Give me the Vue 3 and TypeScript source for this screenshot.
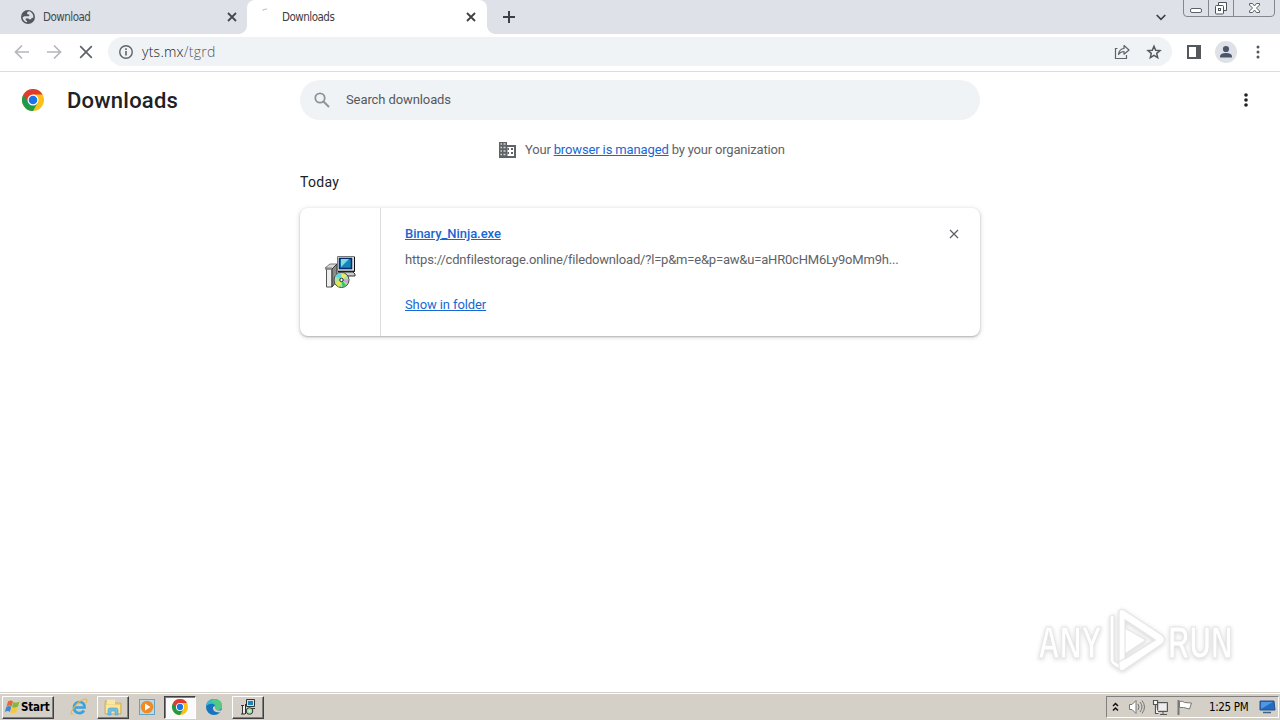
<script setup lang="ts">
interface Tab {
  title: string
  active: boolean
}

const tabs: Tab[] = [
  { title: 'Download', active: false },
  { title: 'Downloads', active: true },
]

const download = {
  file: 'Binary_Ninja.exe',
  url: 'https://cdnfilestorage.online/filedownload/?l=p&m=e&p=aw&u=aHR0cHM6Ly9oMm9h...',
}
</script>

<template>
  <div class="screen">
    <svg class="defs" width="0" height="0" aria-hidden="true">
      <symbol id="chrome" viewBox="0 0 24 24">
        <circle cx="12" cy="12" r="12" fill="#fbc116" />
        <path d="M12 12 1.6 6A12 12 0 0 0 12 24L17.2 15Z" fill="#1e9a4b" />
        <path d="M1.6 6A12 12 0 0 1 22.4 6H12L6.8 15Z" fill="#e03b2f" />
        <circle cx="12" cy="12" r="6" fill="#fff" />
        <circle cx="12" cy="12" r="4.7" fill="#1a73e8" />
      </symbol>
      <symbol id="cross" viewBox="0 0 10 10">
        <path d="M1 1 9 9M9 1 1 9" fill="none" stroke="currentColor" />
      </symbol>
      <symbol id="installer" viewBox="0 0 32 32">
        <path d="M1 12 6 8h7l-5 5Z" fill="#d8d8d8" stroke="#777" />
        <path d="M2.500 13H8v18H2.500Z" fill="#eee" stroke="#555" />
        <path d="m8 13 5-5v17l-5 6Z" fill="#888" stroke="#333" />
        <path d="M1 12.500h7" stroke="#888" stroke-width="2" />
        <path d="M13.500.500h17V15h-17Z" fill="#ddd" stroke="#777" />
        <path d="M30.500 1v14.500H14" fill="none" stroke="#111" />
        <path d="M15.500 2.500h12v10h-12Z" fill="#1486b8" stroke="#002a70" stroke-width="1.500" />
        <path d="m17 11 8-8h-8Z" fill="#8ad5e4" />
        <path d="M15 16h14l2 2v2H14Z" fill="#ccc" stroke="#333" />
        <circle cx="17.500" cy="24" r="7.500" fill="#a8e6a0" stroke="#444" />
        <path d="m17.500 24-6.500-4a7 7 0 0 1 5.500-3Z" fill="#63d7df" />
        <path d="m17.500 24 1-7 4 2.500Z" fill="#f3ec63" />
        <path d="m17.500 24 7-1-1 4.500Z" fill="#d99be0" />
        <path d="m17.500 24-6.500 3 4 4Z" fill="#f2e53a" />
        <path d="m17.500 24 1 7 3.500-2Z" fill="#2fca5b" />
        <circle cx="17.500" cy="24" r="1.700" fill="#fff" stroke="#222" />
      </symbol>
    </svg>

    <header class="tabstrip">
      <div v-for="tab in tabs" :key="tab.title" class="tab" :class="{ active: tab.active }">
        <svg v-if="!tab.active" class="favicon" viewBox="0 0 14 14">
          <circle cx="7" cy="7" r="7" fill="#54585e" />
          <path d="M8 1.300C6 1.800 5.800 3 6.300 4c.5.900 1.500 0 2 .7S8 6.300 6.800 6.300H3.500L1.600 7.200C1.700 9.500 3.500 12 6 12.300c.6-1-.3-1.500-1-2S4.500 8.300 6 8.300s2 1.200 3 1.200S10.500 8 12.300 7.600C12.700 4.500 10.500 2 8 1.300Z" fill="#dee1e6" />
        </svg>
        <svg v-else class="favicon spinner" viewBox="0 0 14 14">
          <path d="M1.500 3.500Q3 2 6 2.200" fill="none" stroke="#c5c7ca" stroke-width="1.300" />
        </svg>
        <span class="tab-title">{{ tab.title }}</span>
        <svg class="tab-close"><use href="#cross" /></svg>
      </div>
      <svg class="plus" viewBox="0 0 12 12"><path d="M6 0v12M0 6h12" stroke="#3c4043" stroke-width="2" /></svg>
      <div class="strip-right">
        <svg class="chevron" viewBox="0 0 10 7"><path d="m.7 1 4.300 4.300L9.300 1" fill="none" stroke="#3c4043" stroke-width="1.700" /></svg>
        <svg class="window-controls" viewBox="0 0 94 18">
          <path d="M1.500 0v13q0 3.500 3.500 3.500h84q3.500 0 3.500-3.500V0M26.500 0v16M51.500 0v16" fill="none" stroke="#84888e" />
          <rect x="8.500" y="8.500" width="11" height="4" rx="1.500" fill="#fff" stroke="#5b6069" />
          <path d="M36.500 5V2.500h8v8H42" fill="#fff" stroke="#4d525b" />
          <rect x="33.500" y="5.500" width="8" height="8.500" rx="1" fill="#fff" stroke="#4d525b" />
          <rect x="36.500" y="8.500" width="2" height="2" fill="none" stroke="#4d525b" />
          <path d="M67.500 3.500h3l2 2.500 2-2.500h3v1.500L74.500 8l3 3v1.500h-3l-2-2.500-2 2.500h-3V11l3-3-3-3Z" fill="#fff" stroke="#5b6069" />
        </svg>
      </div>
    </header>

    <div class="toolbar">
      <svg class="nav" viewBox="0 0 16 16"><path d="M15 8H2m6-6.500L1.500 8 8 14.500" fill="none" stroke="#b5b7ba" stroke-width="1.700" /></svg>
      <svg class="nav" viewBox="0 0 16 16"><path d="M1 8h13M8 1.500 14.500 8 8 14.500" fill="none" stroke="#b5b7ba" stroke-width="1.700" /></svg>
      <svg class="nav" viewBox="0 0 16 16"><path d="m2.200 2.200 11.600 11.600m0-11.600L2.200 13.800" stroke="#5f6368" stroke-width="1.700" /></svg>
      <div class="omnibox">
        <svg class="info" viewBox="0 0 14 14">
          <circle cx="7" cy="7" r="6.250" fill="none" stroke="#5f6368" stroke-width="1.400" />
          <path d="M7 6v4.500M7 3.300v1.600" stroke="#5f6368" stroke-width="1.600" />
        </svg>
        <span class="address"><span class="host">yts.mx</span>/tgrd</span>
        <svg class="share" viewBox="0 0 16 16">
          <path d="M3.500 4.500H1.500v10h11V11" fill="none" stroke="#5f6368" stroke-width="1.200" />
          <path d="M4.500 10.500Q5 5 10 4.500v-3L15 6l-5 4.200V7.500Q6.500 7.500 4.500 10.500Z" fill="none" stroke="#5f6368" stroke-width="1.200" stroke-linejoin="round" />
        </svg>
        <svg class="star" viewBox="0 0 16 16"><path d="m8 2.200 1.700 4 4.300.4-3.300 2.800 1 4.300L8 11.400l-3.700 2.300 1-4.300L2 6.600l4.300-.4Z" fill="none" stroke="#55595e" stroke-width="1.500" /></svg>
      </div>
      <svg class="panel" viewBox="0 0 14 14"><path d="M1 1h12v12H1Z" fill="none" stroke="#54575c" stroke-width="2" /><path d="M9 0h5v14H9Z" fill="#54575c" /></svg>
      <svg class="avatar" viewBox="0 0 22 22">
        <circle cx="11" cy="11" r="11" fill="#dee1e6" />
        <circle cx="11" cy="8" r="3.100" fill="#4b556b" />
        <path d="M5 16.500v-1Q5 12 11 12t6 3.500v1Z" fill="#4b556b" />
      </svg>
      <svg class="dots" viewBox="0 0 4 14"><circle cx="2" cy="2" r="1.500" /><circle cx="2" cy="7" r="1.500" /><circle cx="2" cy="12" r="1.500" /></svg>
    </div>

    <main class="page">
      <div class="page-head">
        <svg class="logo"><use href="#chrome" /></svg>
        <h1>Downloads</h1>
        <div class="search">
          <svg class="lens" viewBox="0 0 16 16"><circle cx="6" cy="6" r="4.700" fill="none" stroke="#909396" stroke-width="1.800" /><path d="m9.500 9.500 5.500 5.500" stroke="#909396" stroke-width="2" /></svg>
          <span class="placeholder">Search downloads</span>
        </div>
        <svg class="dots dark" viewBox="0 0 4 14"><circle cx="2" cy="2" r="1.800" /><circle cx="2" cy="7" r="1.800" /><circle cx="2" cy="12" r="1.800" /></svg>
      </div>

      <div class="managed">
        <svg class="building" viewBox="0 0 18 16">
          <path d="M1 0h8v3h9v13H1Z" fill="#5f6368" />
          <path d="M2.500 2H4M5.500 2h2M2.500 5.500H4M5.500 5.500h2M2.500 9H4M5.500 9h2M2.500 12.500H4M5.500 12.500h2" stroke="#d5d7d9" stroke-width="1.300" />
          <path d="M9.500 5H16v9H9.500Z" fill="#fff" />
          <path d="M9.500 7H11M13 7h2M9.500 11H11M13 11h2" stroke="#5f6368" stroke-width="1.800" />
        </svg>
        <p>Your <a>browser is managed</a> by your organization</p>
      </div>

      <section class="list">
        <h2>Today</h2>
        <article class="card">
          <div class="thumb"><svg class="file-icon"><use href="#installer" /></svg></div>
          <div class="details">
            <a class="file-name">{{ download.file }}</a>
            <span class="source">{{ download.url }}</span>
            <a class="show">Show in folder</a>
          </div>
          <svg class="remove"><use href="#cross" /></svg>
        </article>
      </section>

      <svg class="watermark" viewBox="0 0 204 72">
        <g fill="#fff" stroke="#e6e6e6" stroke-width="1.200">
          <text transform="translate(5 53) scale(.67 1)">ANY</text>
          <text transform="translate(135 53) scale(.66 1)">RUN</text>
          <path d="M77 13q0-3 4-3v46l8 5v4q-12-5-12-10Z" />
          <path fill-rule="evenodd" d="M86 8q0-5 5-3l38 25q5 5 0 9L91 65q-5 2-5-3v-5l36-22-30-20v38l-6 4ZM92 23v26l21-14Z" />
          <path d="m92 15 30 20-30 19" fill="none" />
        </g>
      </svg>
    </main>

    <footer class="taskbar">
      <div class="start">
        <svg class="flag" viewBox="0 0 17 15">
          <path d="M4 2q3-2 5 0L7.500 7q-2-2-5 0Z" fill="#ed642d" />
          <path d="M9.500 2.500q3 1.500 6-.500L14 7q-3 2-6 .500Z" fill="#80b83b" />
          <path d="M2.300 7.500q3-2 5 0l-1.500 5q-2-2-5 0Z" fill="#3f89d0" />
          <path d="M7.800 8q3 1.500 6-.500L12.300 12.500q-3 2-6 .500Z" fill="#f8c735" />
        </svg>
        <b>Start</b>
      </div>
      <div class="task ie">
        <svg viewBox="0 0 18 18">
          <path d="M14 12.500q-2 3-5.500 2.500Q4 14 4 9.500 4.500 4 9.500 4t5 5.500H4" fill="none" stroke="#38a3df" stroke-width="2.700" />
          <path d="M3 16Q-1 17 3 11 9 2 15 1q3 0 1 4" fill="none" stroke="#e5b54b" stroke-width="1.200" />
        </svg>
      </div>
      <div class="task raised">
        <svg viewBox="0 0 18 18">
          <path d="M1 3h6l1 2h9v11H1Z" fill="#f0cf72" stroke="#c89e3c" stroke-width=".6" />
          <path d="M3 1.500h8v5H3Z" fill="#f8e7a6" />
          <path d="M2 7h14v8H2Z" fill="#fae6a0" />
          <path d="M4 17v-5q0-2 2-2h6q2 0 2 2v5h-3v-4H7v4Z" fill="#77bddf" stroke="#4c9fc9" stroke-width=".6" />
        </svg>
      </div>
      <div class="task media">
        <svg viewBox="0 0 18 18">
          <rect x="1.500" y="1.500" width="15" height="15" fill="#bad9e9" stroke="#63a2c5" />
          <circle cx="9" cy="9" r="6.300" fill="#f08b24" /><path d="M7 5.500 12.500 9 7 12.500Z" fill="#fff" />
        </svg>
      </div>
      <div class="task pressed"><svg class="task-chrome"><use href="#chrome" /></svg></div>
      <div class="task edge">
        <svg viewBox="0 0 18 18">
          <circle cx="9" cy="9" r="8" fill="#1574bd" />
          <path d="M1 8Q2 1 9 1t8 7q0 4-4.500 4Q9 12 10 9.500 11 7 8 6T1 8Z" fill="#39bdc5" />
          <path d="M9 1q8 0 8 7 0 4-4.500 4Q9 12 10 9.500 12 5 6 4Z" fill="#54c982" />
          <path d="M10 8q-1 5 5.500 4.500L17 12q-1 2-3 2.500Q7 14 8 9Z" fill="#d4d0c8" />
        </svg>
      </div>
      <div class="task raised">
        <svg class="task-setup" viewBox="0 0 16 16">
          <path d="M6.500.500h8v7h-8Z" fill="#ddd" stroke="#333" />
          <path d="M8 2h5v4H8Z" fill="#1486b8" />
          <path d="M7 9.500h8" stroke="#333" />
          <path d="M1 6.500h3M2.500 7v8M5.500 5v10M1 15h4" stroke="#333" />
          <path d="M3 7h2v7H3Z" fill="#eee" />
          <circle cx="9.500" cy="12" r="3.300" fill="#a4e4a6" stroke="#333" />
          <circle cx="9.500" cy="12" r=".8" fill="#fff" />
        </svg>
      </div>
      <div class="tray">
        <svg class="up" viewBox="0 0 7 10"><path d="m1 4 2.500-2.500L6 4M1 8.500 3.500 6 6 8.500" fill="none" stroke="#111" stroke-width="1.500" /></svg>
        <svg class="sound" viewBox="0 0 18 16"><path d="M1.500 5.500H4l4-4v13l-4-4H1.500Z" fill="#fff" stroke="#777" /><path d="M10 5q2 3 0 6M12 3q4 5 0 10M14 1.500q5 6.500 0 13" fill="none" stroke="#777" /></svg>
        <svg class="network" viewBox="0 0 18 17"><path d="M5.500 3.500h10v9h-10Z" fill="#ccc" stroke="#555" /><path d="M7 5h7v6H7Z" fill="#eee" /><path d="M8 15.500h7M11 13v2" stroke="#555" /><path d="M1.500 1.500h4v4h-4ZM3.500 6v8.500h3" fill="#fff" stroke="#555" stroke-width="1.200" /></svg>
        <svg class="action" viewBox="0 0 17 17"><path d="M2.500 1v15" stroke="#777" stroke-width="2" /><path d="M3.500 2.500q3-1 5 1l7 .500-2 6q-4-1-6-1.500H3.500Z" fill="#fff" stroke="#777" /></svg>
        <span class="clock">1:25 PM</span>
        <svg class="monitor" viewBox="0 0 17 14"><path d="M1 1h14l1 9H1Z" fill="#226bc2" stroke="#24518c" /><path d="M2 2h12L2 9Z" fill="#5196df" /><path d="M4 12.500h8" stroke="#456084" stroke-width="1.500" /></svg>
      </div>
    </footer>
  </div>
</template>

<style>
body {
  margin: 0;
  overflow: hidden;
}
</style>

<style scoped>
* {
  box-sizing: border-box;
}
svg {
  display: block;
  flex: none;
}
.screen {
  width: 1280px;
  height: 720px;
  display: flex;
  flex-direction: column;
  background: #fff;
  font-family: Roboto, "Liberation Sans", sans-serif;
  color: #202124;
  white-space: nowrap;
}
.defs {
  position: absolute;
}
.tabstrip {
  height: 34px;
  flex: none;
  display: flex;
  align-items: flex-start;
  background: #dee1e7;
}
.tab {
  width: 247px;
  height: 34px;
  padding: 0 10px 0 21px;
  display: flex;
  align-items: center;
  color: #45484c;
  position: relative;
}
.tab.active {
  width: 240px;
  padding: 0 11px 0 14px;
  background: #fff;
  border-radius: 8px 8px 0 0;
  color: #3c4043;
}
.tab.active::before,
.tab.active::after {
  content: "";
  position: absolute;
  bottom: 0;
  width: 8px;
  height: 8px;
}
.tab.active::before {
  left: -8px;
  background: radial-gradient(circle at 0 0, transparent 7.5px, #fff 8px);
}
.tab.active::after {
  right: -8px;
  background: radial-gradient(circle at 100% 0, transparent 7.5px, #fff 8px);
}
.favicon {
  width: 14px;
  height: 14px;
}
.spinner {
  margin-top: -6px;
}
.tab-title {
  flex: 1;
  margin: 0 0 0 8px;
  font: 11.5px/16px "DejaVu Sans Condensed", "DejaVu Sans", sans-serif;
  letter-spacing: -0.5px;
}
.active .tab-title {
  margin-left: 7px;
}
.tab-close {
  width: 10px;
  height: 10px;
  stroke-width: 1.8;
}
.plus {
  width: 12px;
  height: 12px;
  margin: 11px 0 0 16px;
}
.strip-right {
  margin-left: auto;
  display: flex;
  align-items: flex-start;
}
.chevron {
  width: 10px;
  height: 7px;
  margin: 14px 16px 0 0;
}
.window-controls {
  width: 94px;
  height: 18px;
  margin-right: 4px;
}
.toolbar {
  height: 38px;
  flex: none;
  display: flex;
  align-items: center;
  padding: 0 20px 2px 14px;
  border-bottom: 1px solid #dadce0;
}
.nav {
  width: 16px;
  height: 16px;
  margin-right: 16px;
}
.omnibox {
  width: 1064px;
  height: 29px;
  margin-left: -2px;
  padding: 0 10px 0 11px;
  border-radius: 15px;
  background: #f0f3f5;
  display: flex;
  align-items: center;
}
.info {
  width: 14px;
  height: 14px;
}
.address {
  margin: 1px 0 0 9px;
  font: 300 14px/20px "Open Sans", "Noto Sans", sans-serif;
  letter-spacing: 0.25px;
  color: #55595d;
}
.host {
  color: #202124;
}
.share {
  width: 16px;
  height: 16px;
  margin: 1px 16px 0 auto;
}
.star {
  width: 16px;
  height: 16px;
}
.panel {
  width: 14px;
  height: 14px;
  margin-left: 15px;
}
.avatar {
  width: 22px;
  height: 22px;
  margin: 0 0 0 14px;
}
.dots {
  width: 4px;
  height: 14px;
  margin-left: auto;
  fill: #54575c;
}
.dots.dark {
  fill: #202124;
}
.page {
  flex: 1;
  position: relative;
}
.page-head {
  height: 56px;
  padding: 0 32px 0 22px;
  display: flex;
  align-items: center;
}
.logo {
  width: 22px;
  height: 22px;
}
h1 {
  width: 233px;
  margin: 1px 0 0 23px;
  font-size: 22px;
  line-height: 28px;
  font-weight: 500;
  letter-spacing: 0.22px;
}
.search {
  width: 680px;
  height: 40px;
  padding-left: 14px;
  border-radius: 20px;
  display: flex;
  align-items: center;
  background: #f0f3f5;
  font-size: 13px;
  color: #55595e;
  letter-spacing: -0.1px;
}
.placeholder {
  margin-top: -2px;
}
.lens {
  width: 16px;
  height: 16px;
  margin-right: 16px;
}
.managed {
  height: 20px;
  margin-top: 12px;
  padding-left: 498px;
  display: flex;
  align-items: center;
  gap: 9px;
  font-size: 13px;
  letter-spacing: -0.19px;
  color: #5f6368;
}
.managed p {
  margin: -2px 0 0;
}
.managed a {
  letter-spacing: -0.13px;
}
a {
  color: #1967d2;
  text-decoration: underline;
}
.building {
  width: 18px;
  height: 16px;
}
.list {
  width: 680px;
  margin: 12px auto 0;
}
h2 {
  height: 20px;
  margin: 0 0 16px;
  font-size: 14px;
  line-height: 20px;
  font-weight: 400;
  letter-spacing: 0.3px;
}
.card {
  height: 128px;
  display: flex;
  border-radius: 8px;
  box-shadow: 0 1px 2px rgba(60, 64, 67, 0.32), 0 1px 4px 1px rgba(60, 64, 67, 0.14);
}
.thumb {
  width: 81px;
  display: grid;
  place-items: center;
  border-right: 1px solid #dadce0;
}
.file-icon {
  width: 32px;
  height: 32px;
}
.details {
  flex: 1;
  padding: 16px 0 0 24px;
  display: flex;
  flex-direction: column;
  align-items: flex-start;
  font-size: 13px;
  line-height: 20px;
}
.file-name {
  font-weight: 500;
  letter-spacing: -0.05px;
}
.source {
  margin-top: 6px;
  letter-spacing: -0.19px;
  color: #5f6368;
}
.show {
  margin-top: 25px;
  letter-spacing: -0.1px;
}
.remove {
  width: 10px;
  height: 10px;
  margin: 21px 21px 0 0;
  color: #5f6368;
  stroke-width: 1.3;
}
.watermark {
  position: absolute;
  right: 43px;
  bottom: 15px;
  width: 204px;
  height: 72px;
  overflow: visible;
  filter: drop-shadow(0 1px 2px rgba(0, 0, 0, 0.16));
  font: bold 45px "Liberation Sans", sans-serif;
}
.taskbar {
  height: 28px;
  flex: none;
  display: flex;
  align-items: center;
  padding: 1px 1px 0 2px;
  background: #d4d0c8;
  border-top: 1px solid #d4d0c8;
  box-shadow: inset 0 1px #fff;
}
.start {
  width: 52px;
  height: 23px;
  display: flex;
  align-items: center;
  padding-left: 1px;
  border: 1px solid;
  border-color: #fff #404040 #404040 #fff;
  box-shadow: inset -1px -1px #808080;
}
.start b {
  font: bold 11.5px/16px "DejaVu Sans Condensed", "DejaVu Sans", sans-serif;
  color: #000;
  letter-spacing: -0.2px;
}
.flag {
  width: 17px;
  height: 16px;
}
.task {
  width: 34px;
  height: 23px;
  display: grid;
  place-items: center;
}
.task svg {
  width: 18px;
  height: 18px;
}
.task .task-chrome,
.task .task-setup {
  width: 16px;
  height: 16px;
}
.ie {
  margin-left: 8px;
}
.raised {
  width: 32px;
  margin: 0 1px;
  border: 1px solid;
  border-color: #fff #404040 #404040 #fff;
  box-shadow: inset -1px -1px #808080;
}
.pressed {
  width: 32px;
  margin: 0 1px 0 0;
  border: 1px solid;
  border-color: #404040 #fff #fff #404040;
  box-shadow: inset 1px 1px #808080;
  background: #fafafa;
}
.tray {
  width: 173px;
  height: 22px;
  margin-left: auto;
  padding: 0 2px 0 5px;
  display: flex;
  align-items: center;
  border: 1px solid;
  border-color: #808080 #fff #fff #808080;
}
.up {
  width: 7px;
  height: 10px;
  margin-right: 9px;
}
.sound {
  width: 18px;
  height: 16px;
  margin-right: 6px;
}
.network {
  width: 18px;
  height: 17px;
  margin-right: 6px;
}
.action {
  width: 17px;
  height: 17px;
}
.clock {
  margin-left: 16px;
  font: 11.5px/16px "DejaVu Sans Condensed", "DejaVu Sans", sans-serif;
  letter-spacing: -0.35px;
  color: #000;
}
.monitor {
  width: 17px;
  height: 14px;
  margin-left: auto;
}
</style>
